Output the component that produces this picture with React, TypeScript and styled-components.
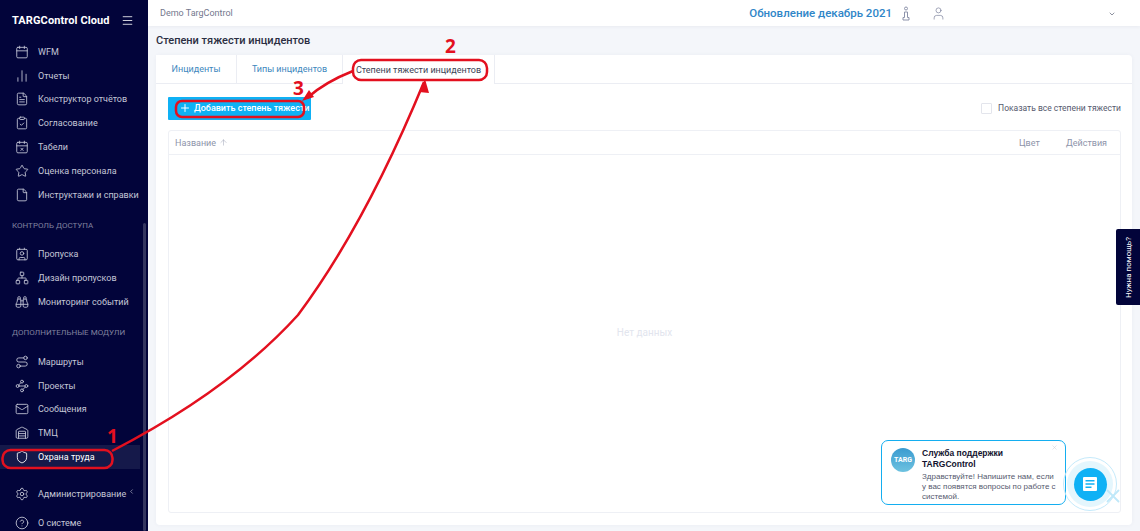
import React from 'react'
import styled, { createGlobalStyle } from 'styled-components'
import {
  Menu, Calendar, BarChart2, FileText, ClipboardCheck, CalendarX, Star, File,
  Contact, Waypoints, Network, Mail, Warehouse, Shield, Settings, CircleHelp,
  Binoculars, Route, ChevronDown, ChevronLeft, User, Plus, ArrowUp, X
} from 'lucide-react'

const GlobalStyle = createGlobalStyle`
  html, body, #root { margin: 0; height: 100%; }
  body {
    overflow: hidden;
    background: #f4f6fa;
    font-family: Roboto, "Liberation Sans", sans-serif;
  }
`

const topItems = [
  { label: 'WFM', icon: Calendar },
  { label: 'Отчеты', icon: BarChart2 },
  { label: 'Конструктор отчётов', icon: FileText },
  { label: 'Согласование', icon: ClipboardCheck },
  { label: 'Табели', icon: CalendarX },
  { label: 'Оценка персонала', icon: Star },
  { label: 'Инструктажи и справки', icon: File }
]
const accessItems = [
  { label: 'Пропуска', icon: Contact },
  { label: 'Дизайн пропусков', icon: Network },
  { label: 'Мониторинг событий', icon: Binoculars }
]
const moduleItems = [
  { label: 'Маршруты', icon: Route },
  { label: 'Проекты', icon: Waypoints },
  { label: 'Сообщения', icon: Mail },
  { label: 'ТМЦ', icon: Warehouse },
  { label: 'Охрана труда', icon: Shield, active: true }
]

const App = () => {
  const renderItems = (items: { label: string, icon: typeof Menu, active?: boolean }[]) =>
    items.map(({ label, icon: Icon, active }) => (
      <NavItem key={label} $active={active}>
        <Icon size={14} strokeWidth={1.5} />
        <span>{label}</span>
      </NavItem>
    ))

  return (
    <Container>
      <GlobalStyle />
      <Sidebar>
        <Brand>
          <BrandName>TARGControl Cloud</BrandName>
          <Menu size={13} strokeWidth={1.5} />
        </Brand>
        <NavGroup>{renderItems(topItems)}</NavGroup>
        <NavTitle>КОНТРОЛЬ ДОСТУПА</NavTitle>
        <NavGroup>{renderItems(accessItems)}</NavGroup>
        <NavTitle>ДОПОЛНИТЕЛЬНЫЕ МОДУЛИ</NavTitle>
        <NavGroup>{renderItems(moduleItems)}</NavGroup>
        <BottomGroup>
          <NavItem>
            <Settings size={14} strokeWidth={1.5} />
            <span>Администрирование</span>
            <Chevron><ChevronLeft size={7} /></Chevron>
          </NavItem>
          <LastItem>
            <CircleHelp size={14} strokeWidth={1.5} />
            <span>О системе</span>
          </LastItem>
        </BottomGroup>
        <ScrollThumb />
      </Sidebar>

      <Main>
        <Header>
          <Company>Demo TargControl</Company>
          <UpdateLink>Обновление декабрь 2021</UpdateLink>
          <HeaderIcons>
            <svg width="10" height="15" viewBox="0 0 10 15" fill="none" stroke="#8d93ab" strokeWidth="1">
              <circle cx="5" cy="2.5" r="1.5" />
              <path d="M3.5 6h3v5.5h1.5v2.5h-6v-2.5h1.5z" />
            </svg>
            <User size={15} strokeWidth={1} color="#6d7390" />
          </HeaderIcons>
          <HeaderChevron><ChevronDown size={8} strokeWidth={2} /></HeaderChevron>
        </Header>

        <PageTitle>Степени тяжести инцидентов</PageTitle>

        <Card>
          <Tabs>
            <Tab $width={81}>Инциденты</Tab>
            <Tab $width={106}>Типы инцидентов</Tab>
            <Tab $width={152} $active>Степени тяжести инцидентов</Tab>
          </Tabs>
          <CardBody>
            <Toolbar>
              <AddButton><Plus size={12} strokeWidth={2} />Добавить степень тяжести</AddButton>
              <CheckLabel><CheckBox />Показать все степени тяжести</CheckLabel>
            </Toolbar>
            <Table>
              <TableHead>
                <NameCol>Название <ArrowUp size={9} strokeWidth={1.2} /></NameCol>
                <ColorCol>Цвет</ColorCol>
                <ActionsCol>Действия</ActionsCol>
              </TableHead>
              <EmptyRow>Нет данных</EmptyRow>
            </Table>
          </CardBody>
        </Card>
      </Main>

      <HelpTab><span>Нужна помощь?</span></HelpTab>

      <ChatBubble>
        <ChatClose><X size={7} strokeWidth={1.5} /></ChatClose>
        <Avatar>TARG</Avatar>
        <ChatText>
          <ChatTitle>Служба поддержки TARGControl</ChatTitle>
          <ChatMessage>Здравствуйте! Напишите нам, если у вас появятся вопросы по работе с системой.</ChatMessage>
        </ChatText>
      </ChatBubble>
      <ChatRing>
        <ChatOuter>
          <ChatButton>
            <svg width="14" height="14" viewBox="0 0 14 14" fill="#fff">
              <path d="M1 0h12a1 1 0 0 1 1 1v12a1 1 0 0 1-1 1H1a1 1 0 0 1-1-1V1a1 1 0 0 1 1-1zm1.5 3v1.5h9V3zm0 3.2v1.5h9V6.200zm0 3.200v1.500h6V9.400z" fillRule="evenodd" />
            </svg>
          </ChatButton>
        </ChatOuter>
        <RingCross><X size={22} strokeWidth={2} /></RingCross>
      </ChatRing>

      <Arrows width="1140" height="531" viewBox="0 0 1140 531" fill="none">
        <rect x="2.500" y="450" width="110" height="18" rx="8" stroke="#e3101f" strokeWidth="2.500" />
        <rect x="353" y="60" width="134" height="20" rx="8" stroke="#e3101f" strokeWidth="2.500" />
        <rect x="176" y="101" width="128" height="16" rx="6" stroke="#e3101f" strokeWidth="2.500" />
        <path d="M112 451 Q230 390 298 315 Q365 225 424 82" stroke="#e3101f" strokeWidth="2.500" />
        <path d="M419 92 L425 79 L429 93 Z" fill="#e3101f" />
        <path d="M353 71 Q325 82 307 98" stroke="#e3101f" strokeWidth="2.500" />
        <path d="M302 101 L314 97 L309 90 Z" fill="#e3101f" />
      </Arrows>
      <StepOne>1</StepOne>
      <StepTwo>2</StepTwo>
      <StepThree>3</StepThree>
    </Container>
  )
}

export default App

const Container = styled.div`
  position: relative;
  width: 1140px;
  height: 531px;
  display: flex;
  overflow: hidden;
`

const Sidebar = styled.nav`
  position: relative;
  width: 148px;
  flex-shrink: 0;
  height: 531px;
  overflow: hidden;
  background: #02043a;
  color: #c4c6d6;
`

const Brand = styled.div`
  height: 40px;
  display: flex;
  align-items: center;
  justify-content: space-between;
  padding: 0 14px 0 12px;
  color: #fff;
`

const BrandName = styled.div`
  font-size: 11px;
  font-weight: 700;
  letter-spacing: .1px;
`

const NavGroup = styled.div`
  display: flex;
  flex-direction: column;
  padding-right: 8px;
`

const NavTitle = styled.div`
  height: 20px;
  margin: 9px 0 7px;
  padding-left: 12px;
  display: flex;
  align-items: center;
  font-size: 8px;
  color: #80829f;
  white-space: nowrap;
`

const NavItem = styled.div<{ $active?: boolean }>`
  position: relative;
  height: 23.8px;
  display: flex;
  align-items: center;
  gap: 12px;
  padding-left: 12px;
  font-size: 9px;
  white-space: nowrap;
  color: ${p => p.$active ? '#fff' : '#c4c6d6'};
  background: ${p => p.$active ? '#15194a' : 'transparent'};
  svg { flex-shrink: 0; width: 14px; height: 14px; margin-left: 3px; margin-right: -3px; }
`

const NavGroupSpacer = styled.div``

const BottomGroup = styled.div`
  margin-top: 13px;
  padding-right: 8px;
`

const LastItem = styled(NavItem)`
  margin-top: 5px;
`

const Chevron = styled.span`
  position: absolute;
  right: 8px;
  top: 5px;
  svg { width: 7px; height: 7px; }
`

const ScrollThumb = styled.div`
  position: absolute;
  left: 143px;
  top: 223px;
  width: 3px;
  height: 308px;
  border-radius: 2px;
  background: #34365f;
`

const Main = styled.main`
  flex: 1;
  min-width: 0;
  display: flex;
  flex-direction: column;
`

const Header = styled.header`
  height: 26px;
  flex-shrink: 0;
  display: flex;
  align-items: center;
  background: #fff;
  box-shadow: 0 1px 3px rgba(60, 70, 110, .06);
  padding-left: 12px;
`

const Company = styled.div`
  font-size: 9px;
  color: #74788d;
`

const UpdateLink = styled.div`
  margin-left: auto;
  font-size: 11.500px;
  font-weight: 500;
  color: #2f86c8;
`

const HeaderIcons = styled.div`
  display: flex;
  align-items: center;
  gap: 20px;
  margin-left: 9px;
`

const HeaderChevron = styled.div`
  display: flex;
  margin: 2px 24px 0 162px;
  color: #555a70;
`

const PageTitle = styled.h1`
  margin: 0;
  height: 29px;
  padding: 8px 0 0 8px;
  box-sizing: border-box;
  font-size: 11px;
  font-weight: 500;
  line-height: 13px;
  color: #2b2f42;
`

const Card = styled.section`
  height: 470px;
  width: 976px;
  margin-left: 8px;
  background: #fff;
  border-radius: 4px;
  box-shadow: 0 0 4px rgba(60, 70, 110, .05);
  display: flex;
  flex-direction: column;
`

const Tabs = styled.div`
  height: 29px;
  flex-shrink: 0;
  display: flex;
  border-bottom: 1px solid #ebedf3;
  box-sizing: border-box;
`

const Tab = styled.div<{ $width: number, $active?: boolean }>`
  width: ${p => p.$width}px;
  display: flex;
  align-items: center;
  justify-content: center;
  border-right: 1px solid #ebedf3;
  font-size: 9px;
  box-sizing: border-box;
  white-space: nowrap;
  color: ${p => p.$active ? '#3b3f55' : '#3d87bd'};
  background: #fff;
  ${p => p.$active ? 'height: 29px;' : ''}
`

const CardBody = styled.div`
  flex: 1;
  display: flex;
  flex-direction: column;
  padding: 12px 11px 12px 12px;
  min-height: 0;
`

const Toolbar = styled.div`
  display: flex;
  align-items: center;
  justify-content: space-between;
  height: 24px;
  margin-bottom: 10px;
`

const AddButton = styled.button`
  width: 143px;
  height: 23px;
  padding: 0 0 0 11px;
  display: flex;
  align-items: center;
  gap: 3px;
  border: 0;
  border-radius: 1px;
  background: #0fb1f5;
  color: #fff;
  font-family: inherit;
  font-size: 9px;
  font-weight: 500;
  white-space: nowrap;
`

const CheckLabel = styled.label`
  display: flex;
  align-items: center;
  gap: 6px;
  font-size: 8.500px;
  color: #55596e;
`

const CheckBox = styled.span`
  width: 9px;
  height: 9px;
  border: 1px solid #e3e5ec;
  border-radius: 1px;
`

const Table = styled.div`
  flex: 1;
  display: flex;
  flex-direction: column;
  border: 1px solid #eef0f5;
  border-radius: 3px;
`

const TableHead = styled.div`
  height: 24px;
  flex-shrink: 0;
  display: flex;
  align-items: center;
  border-bottom: 1px solid #eef0f5;
  box-sizing: border-box;
  font-size: 9px;
  color: #8e94aa;
`

const NameCol = styled.div`
  flex: 1;
  padding-left: 6px;
  display: flex;
  align-items: center;
  gap: 3px;
`

const ColorCol = styled.div`
  width: 47px;
`

const ActionsCol = styled.div`
  width: 54px;
`

const EmptyRow = styled.div`
  flex: 1;
  display: flex;
  align-items: center;
  justify-content: center;
  padding: 0 0 2px;
  font-size: 10px;
  color: #e2e5ee;
`

const HelpTab = styled.aside`
  position: absolute;
  right: 0;
  top: 229px;
  width: 24px;
  height: 76px;
  display: flex;
  align-items: center;
  justify-content: center;
  background: #02043a;
  border-radius: 2px 0 0 2px;
  span {
    transform: rotate(-90deg);
    white-space: nowrap;
    font-size: 8px;
    color: #fff;
  }
`

const ChatBubble = styled.div`
  position: absolute;
  left: 881px;
  top: 440px;
  width: 185px;
  height: 65px;
  box-sizing: border-box;
  display: flex;
  gap: 7px;
  padding: 7px 8px 0 9px;
  background: #fff;
  border: 1px solid #14aef0;
  border-radius: 7px;
`

const ChatClose = styled.span`
  position: absolute;
  right: 7px;
  top: 3px;
  color: #c4c8d2;
  display: flex;
`

const Avatar = styled.div`
  width: 24px;
  height: 24px;
  flex-shrink: 0;
  border-radius: 50%;
  background: linear-gradient(#3a9bd0, #6ec2e0);
  color: #fff;
  font-size: 7px;
  font-weight: 700;
  display: flex;
  align-items: center;
  justify-content: center;
`

const ChatText = styled.div`
  font-family: "Liberation Sans", Arial, sans-serif;
  min-width: 0;
`

const ChatTitle = styled.div`
  font-size: 8.500px;
  font-weight: 700;
  line-height: 11px;
  color: #11122e;
`

const ChatMessage = styled.div`
  margin-top: 2px;
  font-size: 8px;
  line-height: 10px;
  color: #55596e;
`

const ChatRing = styled.div`
  position: absolute;
  left: 1063px;
  top: 457px;
  width: 54px;
  height: 54px;
  border-radius: 50%;
  border: 1px solid #c5eafb;
  box-sizing: border-box;
  display: flex;
  align-items: center;
  justify-content: center;
`

const ChatOuter = styled.div`
  width: 46px;
  height: 46px;
  border-radius: 50%;
  background: #e4f6fd;
  display: flex;
  align-items: center;
  justify-content: center;
`

const ChatButton = styled.div`
  width: 33px;
  height: 33px;
  border-radius: 50%;
  background: #0fb1f5;
  display: flex;
  align-items: center;
  justify-content: center;
`

const RingCross = styled.div`
  position: absolute;
  left: 38px;
  top: 27px;
  display: flex;
  color: #bfe8f9;
`

const Arrows = styled.svg`
  position: absolute;
  left: 0;
  top: 0;
  pointer-events: none;
`

const Step = styled.div`
  position: absolute;
  font-family: "Open Sans", "Liberation Sans", sans-serif;
  font-size: 19px;
  font-weight: 700;
  line-height: 20px;
  color: #e3101f;
`

const StepOne = styled(Step)`
  left: 107px;
  top: 426px;
`

const StepTwo = styled(Step)`
  left: 445px;
  top: 36px;
`

const StepThree = styled(Step)`
  left: 293px;
  top: 78px;
`

void NavGroupSpacer
